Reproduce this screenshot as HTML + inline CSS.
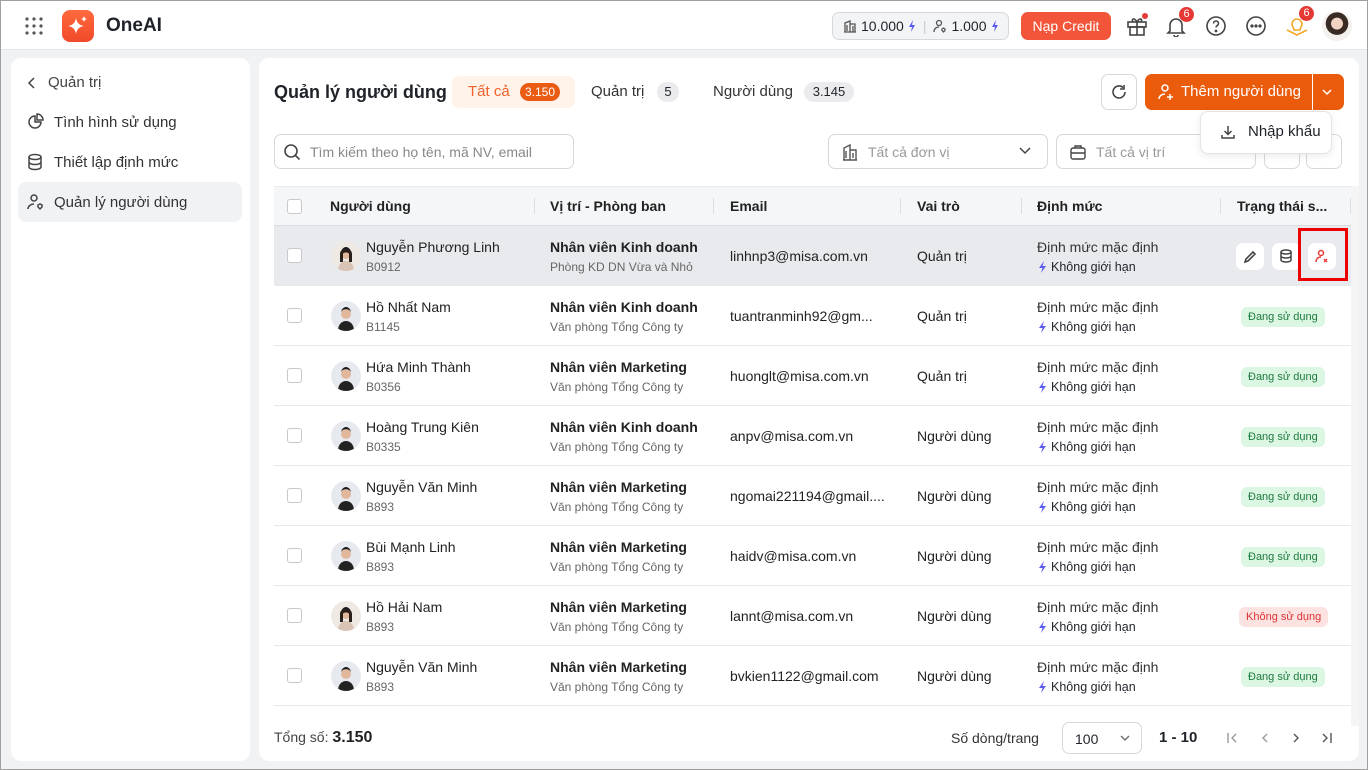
<!DOCTYPE html><html><head><meta charset="utf-8"><style>
*{box-sizing:border-box;margin:0;padding:0}
body{width:1368px;height:770px;overflow:hidden;background:#f1f2f4;font-family:"Liberation Sans",sans-serif;color:#1f2329;position:relative;border:1px solid #a0a0a0}
.a{position:absolute}
.hdr{left:0;top:0;width:1366px;height:49px;background:#fff;border-bottom:1px solid #e6e7ea}
.card{background:#fff;border-radius:10px}
.nav{font-size:15px;color:#333;display:flex;align-items:center;gap:10px}
.th{font-size:14px;font-weight:bold;color:#222;top:197px}
.sep{width:1px;height:16px;background:#ddd;top:197px}
.cb{width:15px;height:15px;border:1px solid #c8c9cc;border-radius:3px;background:#fff}
.nm{font-size:14px;color:#222}
.sm{font-size:12px;color:#666}
.av{width:30px;height:30px;border-radius:50%;overflow:hidden}
.tag{font-size:11px;padding:4px 7px;border-radius:6px}
.ok{background:#dcf6e4;color:#1e7a3d}
.no{background:#fde2e2;color:#d33}
.rowline{left:273px;width:1077px;height:1px;background:#e8e9eb}
svg{display:block}
.bolt{display:inline-block;vertical-align:-2px;margin-right:4px}
</style></head><body>
<div class="a hdr"></div>
<svg class="a" style="left:24px;top:16px" width="18" height="18"><g fill="#555">
<circle cx="2" cy="2" r="1.6"/><circle cx="9" cy="2" r="1.6"/><circle cx="16" cy="2" r="1.6"/><circle cx="2" cy="9" r="1.6"/><circle cx="9" cy="9" r="1.6"/><circle cx="16" cy="9" r="1.6"/><circle cx="2" cy="16" r="1.6"/><circle cx="9" cy="16" r="1.6"/><circle cx="16" cy="16" r="1.6"/></g></svg>
<div class="a" style="left:61px;top:9px;width:32px;height:32px;border-radius:8px;background:linear-gradient(#ff6a3d,#f04a2a)"></div>
<svg class="a" style="left:61px;top:9px" width="32" height="32"><path d="M14 8 Q15 15 22 16 Q15 17 14 24 Q13 17 6 16 Q13 15 14 8Z" fill="#fff"/><path d="M22 6 Q22.5 8.5 25 9 Q22.5 9.5 22 12 Q21.5 9.5 19 9 Q21.5 8.5 22 6Z" fill="#fff"/></svg>
<div class="a" style="left:105px;top:14px;font-size:19px;font-weight:bold">OneAI</div>
<div class="a" style="left:831px;top:11px;width:177px;height:28px;border:1px solid #d6d8dc;border-radius:7px;background:#f3f4f6;font-size:14px;display:flex;align-items:center;padding-left:10px;gap:4px">
<svg width="14" height="14" fill="none" stroke="#555" stroke-width="1.3"><path d="M2 13V4l5-2v11M7 5h5v8M1 13h12M4 6v6M10 7v6"/></svg><span>10.000</span><svg width="8" height="12"><path d="M5 0L1 7h3l-1 5 4-7H4z" fill="#5b5bf0"/></svg><span style="color:#ccc;margin:0 3px">|</span><svg width="14" height="14" fill="none" stroke="#555" stroke-width="1.3"><circle cx="6" cy="4" r="2.5"/><path d="M1 13c0-3 2-5 5-5M9 10l1.5-1 1.5 1v1.5L10.5 13 9 11.5z"/></svg><span>1.000</span><svg width="8" height="12"><path d="M5 0L1 7h3l-1 5 4-7H4z" fill="#5b5bf0"/></svg></div>
<div class="a" style="left:1020px;top:11px;width:90px;height:28px;border-radius:7px;background:#f2553a;color:#fff;font-size:14px;text-align:center;line-height:28px">Nạp Credit</div>
<svg class="a" style="left:1125px;top:14px" width="22" height="22" fill="none" stroke="#444" stroke-width="1.6"><rect x="2" y="7" width="18" height="5"/><rect x="4" y="12" width="14" height="8"/><path d="M11 7v13M11 7C8 2 5 4 7 7M11 7c3-5 6-3 4 0"/></svg>
<div class="a" style="left:1141px;top:12px;width:6px;height:6px;border-radius:50%;background:#e53935"></div>
<svg class="a" style="left:1164px;top:14px" width="22" height="22" fill="none" stroke="#444" stroke-width="1.6"><path d="M5 16V10a6 6 0 0112 0v6l2 2H3z"/><path d="M9 20a2 2 0 004 0"/></svg>
<div class="a" style="left:1178px;top:6px;width:15px;height:15px;border-radius:50%;background:#e53935;color:#fff;font-size:11px;text-align:center;line-height:15px">6</div>
<svg class="a" style="left:1204px;top:14px" width="22" height="22" fill="none" stroke="#444" stroke-width="1.6"><circle cx="11" cy="11" r="9"/><path d="M8.5 8.5a2.5 2.5 0 015 0c0 2-2.5 2-2.5 4"/><circle cx="11" cy="16" r=".6" fill="#444"/></svg>
<svg class="a" style="left:1244px;top:14px" width="22" height="22" fill="none" stroke="#444" stroke-width="1.6"><circle cx="11" cy="11" r="9"/><circle cx="7" cy="11" r=".8" fill="#444"/><circle cx="11" cy="11" r=".8" fill="#444"/><circle cx="15" cy="11" r=".8" fill="#444"/></svg>
<svg class="a" style="left:1284px;top:13px" width="24" height="24" fill="none" stroke="#f5a623" stroke-width="1.6"><path d="M8 13a5 5 0 118 0l-1 3h-6z"/><path d="M2 16l10 5 10-5"/></svg>
<div class="a" style="left:1298px;top:5px;width:15px;height:15px;border-radius:50%;background:#e53935;color:#fff;font-size:11px;text-align:center;line-height:15px">6</div>
<div class="a" style="left:1321px;top:10px;width:30px;height:30px;border-radius:50%;background:radial-gradient(circle at 50% 42%,#f1d3c3 25%,#3a2a24 27%,#3a2a24 48%,#f4f0ee 50%)"></div>

<div class="a card" style="left:10px;top:57px;width:239px;height:703px"></div>
<div class="a nav" style="left:25px;top:73px;color:#444"><svg width="12" height="14" fill="none" stroke="#444" stroke-width="1.5"><path d="M8 2L3 7l5 5"/></svg><span>Quản trị</span></div>
<div class="a nav" style="left:25px;top:112px"><svg width="18" height="18" fill="none" stroke="#444" stroke-width="1.5"><path d="M9 3a6 6 0 106 6H9z"/><path d="M11 1v6h6a6 6 0 00-6-6z"/></svg>Tình hình sử dụng</div>
<div class="a nav" style="left:25px;top:152px"><svg width="18" height="18" fill="none" stroke="#444" stroke-width="1.5"><ellipse cx="9" cy="4" rx="6" ry="2.5"/><path d="M3 4v10c0 1.4 2.7 2.5 6 2.5s6-1.1 6-2.5V4M3 9c0 1.4 2.7 2.5 6 2.5S15 10.4 15 9"/></svg>Thiết lập định mức</div>
<div class="a" style="left:17px;top:181px;width:224px;height:40px;border-radius:8px;background:#f1f2f4"></div>
<div class="a nav" style="left:25px;top:192px"><svg width="18" height="18" fill="none" stroke="#444" stroke-width="1.5"><circle cx="8" cy="5" r="3"/><path d="M2 16c0-3 3-5 6-5"/><path d="M12 12l2-1 2 1v2l-2 2-2-2z"/></svg>Quản lý người dùng</div>

<div class="a card" style="left:258px;top:57px;width:1100px;height:703px"></div>
<div class="a" style="left:273px;top:81px;font-size:18px;font-weight:bold">Quản lý người dùng</div>
<div class="a" style="left:451px;top:75px;width:123px;height:32px;border-radius:7px;background:#fff3ea"></div>
<div class="a" style="left:467px;top:82px;font-size:15px;color:#f0622b">Tất cả</div>
<div class="a" style="left:519px;top:82px;width:40px;height:18px;border-radius:9px;background:#ea5b14;color:#fff;font-size:12px;text-align:center;line-height:18px">3.150</div>
<div class="a" style="left:590px;top:82px;font-size:15px;color:#333">Quản trị</div>
<div class="a" style="left:656px;top:81px;width:22px;height:20px;border-radius:10px;background:#ebebed;font-size:13px;text-align:center;line-height:20px">5</div>
<div class="a" style="left:712px;top:82px;font-size:15px;color:#333">Người dùng</div>
<div class="a" style="left:803px;top:81px;width:50px;height:20px;border-radius:10px;background:#ebebed;font-size:13px;text-align:center;line-height:20px">3.145</div>
<div class="a" style="left:1100px;top:73px;width:36px;height:36px;border:1px solid #d6d8dc;border-radius:7px"></div>
<svg class="a" style="left:1109px;top:82px" width="18" height="18" fill="none" stroke="#444" stroke-width="1.6"><path d="M15 9a6 6 0 11-2-4.5"/><path d="M14 2v4h-4"/></svg>
<div class="a" style="left:1144px;top:73px;width:199px;height:36px;border-radius:7px;background:#ea5b0c"></div>
<div class="a" style="left:1311px;top:73px;width:1px;height:36px;background:#fff"></div>
<svg class="a" style="left:1156px;top:82px" width="18" height="18" fill="none" stroke="#fff" stroke-width="1.5"><circle cx="8" cy="5" r="3"/><path d="M2 16c0-3 3-5 6-5M13 11v6M10 14h6"/></svg>
<div class="a" style="left:1180px;top:82px;font-size:15px;color:#fff">Thêm người dùng</div>
<svg class="a" style="left:1320px;top:86px" width="12" height="10" fill="none" stroke="#fff" stroke-width="1.5"><path d="M2 3l4 4 4-4"/></svg>

<div class="a" style="left:273px;top:133px;width:300px;height:35px;border:1px solid #d6d8dc;border-radius:7px"></div>
<svg class="a" style="left:282px;top:142px" width="18" height="18" fill="none" stroke="#444" stroke-width="1.6"><circle cx="8" cy="8" r="6"/><path d="M12.5 12.5l4 4"/></svg>
<div class="a" style="left:309px;top:143px;font-size:14px;color:#888">Tìm kiếm theo họ tên, mã NV, email</div>
<div class="a" style="left:827px;top:133px;width:220px;height:35px;border:1px solid #d6d8dc;border-radius:7px"></div>
<svg class="a" style="left:841px;top:142px" width="16" height="18" fill="none" stroke="#555" stroke-width="1.4"><path d="M2 17V5l6-3v15M8 7h6v10M1 17h14M4 8v7M11 10v5"/></svg>
<div class="a" style="left:867px;top:143px;font-size:14px;color:#999">Tất cả đơn vị</div>
<svg class="a" style="left:1017px;top:145px" width="14" height="10" fill="none" stroke="#444" stroke-width="1.5"><path d="M2 2l5 5 5-5"/></svg>
<div class="a" style="left:1055px;top:133px;width:200px;height:35px;border:1px solid #d6d8dc;border-radius:7px"></div>
<svg class="a" style="left:1068px;top:142px" width="18" height="18" fill="none" stroke="#444" stroke-width="1.4"><rect x="2" y="5" width="14" height="11" rx="2"/><path d="M6 5V3h6v2M2 10h14"/></svg>
<div class="a" style="left:1095px;top:143px;font-size:14px;color:#999">Tất cả vị trí</div>
<div class="a" style="left:1263px;top:133px;width:36px;height:35px;border:1px solid #d6d8dc;border-radius:7px"></div>
<div class="a" style="left:1305px;top:133px;width:36px;height:35px;border:1px solid #d6d8dc;border-radius:7px"></div>
<div class="a" style="left:1199px;top:110px;width:132px;height:43px;background:#fff;border:1px solid #e3e4e6;border-radius:8px;box-shadow:0 2px 8px rgba(0,0,0,.08)"></div>
<svg class="a" style="left:1219px;top:123px" width="16" height="16" fill="none" stroke="#444" stroke-width="1.5"><path d="M8 2v8M4.5 7L8 10.5 11.5 7M2 11v3h12v-3"/></svg>
<div class="a" style="left:1247px;top:122px;font-size:15px">Nhập khẩu</div>

<div class="a" style="left:273px;top:185px;width:1077px;height:40px;background:#f5f6f7;border-top:1px solid #ececee;border-bottom:1px solid #dcdde0"></div>
<div class="a cb" style="left:286px;top:198px"></div>
<div class="a th" style="left:329px">Người dùng</div><div class="a sep" style="left:533px"></div>
<div class="a th" style="left:549px">Vị trí - Phòng ban</div><div class="a sep" style="left:712px"></div>
<div class="a th" style="left:729px">Email</div><div class="a sep" style="left:899px"></div>
<div class="a th" style="left:916px">Vai trò</div><div class="a sep" style="left:1020px"></div>
<div class="a th" style="left:1036px">Định mức</div><div class="a sep" style="left:1219px"></div>
<div class="a th" style="left:1236px">Trạng thái s...</div><div class="a sep" style="left:1349px"></div>
<div class="a" style="left:1350px;top:185px;width:8px;height:540px;background:#f5f5f6"></div>

<div class="a" style="left:273px;top:225px;width:1077px;height:59px;background:#e9eaed"></div>
<div id="rows"></div>

<script>
var d=[["Nguyễn Phương Linh","B0912","Nhân viên Kinh doanh","Phòng KD DN Vừa và Nhỏ","linhnp3@misa.com.vn","Quản trị",0],
["Hồ Nhất Nam","B1145","Nhân viên Kinh doanh","Văn phòng Tổng Công ty","tuantranminh92@gm...","Quản trị",1],
["Hứa Minh Thành","B0356","Nhân viên Marketing","Văn phòng Tổng Công ty","huonglt@misa.com.vn","Quản trị",1],
["Hoàng Trung Kiên","B0335","Nhân viên Kinh doanh","Văn phòng Tổng Công ty","anpv@misa.com.vn","Người dùng",1],
["Nguyễn Văn Minh","B893","Nhân viên Marketing","Văn phòng Tổng Công ty","ngomai221194@gmail....","Người dùng",1],
["Bùi Mạnh Linh","B893","Nhân viên Marketing","Văn phòng Tổng Công ty","haidv@misa.com.vn","Người dùng",1],
["Hồ Hải Nam","B893","Nhân viên Marketing","Văn phòng Tổng Công ty","lannt@misa.com.vn","Người dùng",2],
["Nguyễn Văn Minh","B893","Nhân viên Marketing","Văn phòng Tổng Công ty","bvkien1122@gmail.com","Người dùng",1]];
var bolt='<svg class="bolt" width="9" height="12"><path d="M6 0L1 7h3.5L3 12l5-7H4.5z" fill="#5b5bf0"/></svg>';
var h="";
d.forEach(function(r,i){var y=225+i*60;var f=(i==0||i==6);
h+='<div class="a rowline" style="top:'+(y+59)+'px"></div>';
h+='<div class="a cb" style="left:286px;top:'+(y+22)+'px"></div>';
h+='<div class="a av" style="left:330px;top:'+(y+15)+'px;background:'+(f?'#efe9e4':'#e6e9ee')+'"><svg width="30" height="30"><path d="M7 30c0-7 4-10 8-10s8 3 8 10z" fill="'+(f?'#d8c3b5':'#222')+'"/><circle cx="15" cy="13" r="5" fill="#e2b89c"/><path d="M10 12c0-5 10-5 10 0c0-4-3-6-5-6s-5 2-5 6z" fill="#1a1a1a"/>'+(f?'<path d="M9 13c0-7 12-7 12 0v8h-3v-8c0-2-6-2-6 0v8H9z" fill="#2a1f1a"/>':'')+'</svg></div>';
h+='<div class="a nm" style="left:365px;top:'+(y+13)+'px">'+r[0]+'</div><div class="a sm" style="left:365px;top:'+(y+34)+'px">'+r[1]+'</div>';
h+='<div class="a nm" style="left:549px;top:'+(y+13)+'px;font-weight:bold;color:#222">'+r[2]+'</div><div class="a sm" style="left:549px;top:'+(y+34)+'px">'+r[3]+'</div>';
h+='<div class="a nm" style="left:729px;top:'+(y+22)+'px">'+r[4]+'</div>';
h+='<div class="a nm" style="left:916px;top:'+(y+22)+'px">'+r[5]+'</div>';
h+='<div class="a nm" style="left:1036px;top:'+(y+13)+'px;color:#333">Định mức mặc định</div><div class="a" style="left:1037px;top:'+(y+34)+'px;font-size:12.5px">'+bolt+'Không giới hạn</div>';
if(r[6]==1)h+='<div class="a tag ok" style="left:1240px;top:'+(y+21)+'px">Đang sử dụng</div>';
if(r[6]==2)h+='<div class="a tag no" style="left:1238px;top:'+(y+21)+'px">Không sử dụng</div>';
});
document.getElementById("rows").innerHTML=h;
</script>
<div class="a" style="left:1235px;top:242px;width:28px;height:27px;background:#fff;border-radius:7px"></div>
<svg class="a" style="left:1241px;top:248px" width="16" height="16" fill="none" stroke="#444" stroke-width="1.6"><path d="M3 13l1-3 7-7 2 2-7 7z"/></svg>
<div class="a" style="left:1271px;top:242px;width:28px;height:27px;background:#fff;border-radius:7px"></div>
<svg class="a" style="left:1277px;top:247px" width="16" height="16" fill="none" stroke="#444" stroke-width="1.5"><ellipse cx="8" cy="4" rx="5" ry="2"/><path d="M3 4v8c0 1.1 2.2 2 5 2s5-.9 5-2V4M3 8c0 1.1 2.2 2 5 2s5-.9 5-2"/></svg>
<div class="a" style="left:1297px;top:227px;width:50px;height:53px;border:3px solid #ee0000"></div>
<div class="a" style="left:1307px;top:242px;width:28px;height:27px;background:#fff;border-radius:7px"></div>
<svg class="a" style="left:1313px;top:247px" width="16" height="16" fill="none" stroke="#e53935" stroke-width="1.4"><circle cx="7" cy="5" r="2.5"/><path d="M2 14c0-3 2-5 5-5M10 11l3 3M13 11l-3 3"/></svg>

<div class="a" style="left:273px;top:728px;font-size:14px;color:#444">Tổng số: <b style="font-size:16px;color:#222">3.150</b></div>
<div class="a" style="left:950px;top:729px;font-size:14px;color:#333">Số dòng/trang</div>
<div class="a" style="left:1061px;top:721px;width:80px;height:32px;border:1px solid #d6d8dc;border-radius:7px;font-size:14px;padding:8px 0 0 12px">100</div>
<svg class="a" style="left:1118px;top:733px" width="12" height="8" fill="none" stroke="#666" stroke-width="1.3"><path d="M2 2l4 4 4-4"/></svg>
<div class="a" style="left:1158px;top:728px;font-size:15px;font-weight:bold">1 - 10</div>
<svg class="a" style="left:1224px;top:730px" width="14" height="14" fill="none" stroke="#999" stroke-width="1.4"><path d="M3 2v10M11 3L7 7l4 4"/></svg>
<svg class="a" style="left:1257px;top:730px" width="14" height="14" fill="none" stroke="#999" stroke-width="1.4"><path d="M9 3L5 7l4 4"/></svg>
<svg class="a" style="left:1288px;top:730px" width="14" height="14" fill="none" stroke="#555" stroke-width="1.4"><path d="M5 3l4 4-4 4"/></svg>
<svg class="a" style="left:1319px;top:730px" width="14" height="14" fill="none" stroke="#555" stroke-width="1.4"><path d="M3 3l4 4-4 4M11 2v10"/></svg>
</body></html>
